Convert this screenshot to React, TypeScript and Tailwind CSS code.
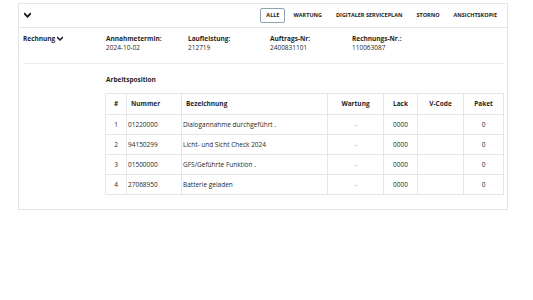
import React from "react";

const rows = [
  { n: "1", num: "01220000", bez: "Dialogannahme durchgeführt ." },
  { n: "2", num: "94150299", bez: "Licht- und Sicht Check 2024" },
  { n: "3", num: "01500000", bez: "GFS/Geführte Funktion ." },
  { n: "4", num: "27068950", bez: "Batterie geladen" },
];

const tabs = ["ALLE", "WARTUNG", "DIGITALER SERVICEPLAN", "STORNO", "ANSICHTSKOPIE"];

function Chevron({ size }: { size: number }) {
  return (
    <svg width={size} height={size} viewBox="0 0 10 10" className="shrink-0">
      <path d="M1 2.6 L5 6.6 L9 2.6" fill="none" stroke="#1a1a1a" strokeWidth="2.6" strokeLinecap="square" />
    </svg>
  );
}

export default function App() {
  return (
    <div className="w-[533px] h-[300px] bg-white text-[#1f1f1f] pt-[3px]" style={{ fontFamily: '"Open Sans", "Noto Sans", sans-serif' }}>
      <div className="ml-[18px] w-[490px] border border-[#e6e6e6]">
        <div className="h-[24px] flex items-center justify-between border-b border-[#e6e6e6] pl-[5px] pr-[3px]">
          <Chevron size={7} />
          <div className="flex items-center">
            {tabs.map((t, i) => (
              <div
                key={t}
                className={
                  i === 0
                    ? "h-[15px] px-[5px] mr-[1px] flex items-center border border-[#8fa3b5] rounded-[2px] text-[5.5px] font-bold text-[#1a1a1a]"
                    : "h-[15px] px-[7px] flex items-center text-[5.5px] font-bold text-[#1a1a1a]"
                }
              >
                {t}
              </div>
            ))}
          </div>
        </div>
        <div className="pl-[4px] pr-[3px] pb-[14px]">
          <div className="flex pt-[6px] pb-[11px] border-b border-[#ececec]">
            <div className="w-[83px] flex items-start">
              <span className="text-[6.5px] font-bold leading-[9px] flex items-center gap-[2px]">
                Rechnung <Chevron size={6} />
              </span>
            </div>
            {[
              ["Annahmetermin:", "2024-10-02"],
              ["Laufleistung:", "212719"],
              ["Auftrags-Nr:", "2400831101"],
              ["Rechnungs-Nr.:", "110063087"],
            ].map(([l, v]) => (
              <div key={l} className="w-[82px]">
                <div className="text-[6.5px] font-bold leading-[9px]">{l}</div>
                <div className="text-[6.5px] leading-[9px]">{v}</div>
              </div>
            ))}
          </div>
          <div className="ml-[82px]">
            <div className="mt-[11px] text-[6.5px] font-bold leading-[9px] ml-[1px]">Arbeitsposition</div>
            <table className="mt-[9px] border-collapse table-fixed w-[398px] text-[6.5px]">
              <colgroup>
                <col className="w-[21px]" />
                <col className="w-[55px]" />
                <col className="w-[146px]" />
                <col className="w-[56px]" />
                <col className="w-[34px]" />
                <col className="w-[46px]" />
                <col className="w-[40px]" />
              </colgroup>
              <thead>
                <tr className="h-[21px] font-bold">
                  <th className="border border-[#e6e6e6] text-center">#</th>
                  <th className="border border-[#e6e6e6] text-left pl-[4px]">Nummer</th>
                  <th className="border border-[#e6e6e6] text-left pl-[4px]">Bezeichnung</th>
                  <th className="border border-[#e6e6e6] text-center">Wartung</th>
                  <th className="border border-[#e6e6e6] text-center">Lack</th>
                  <th className="border border-[#e6e6e6] text-center">V-Code</th>
                  <th className="border border-[#e6e6e6] text-center">Paket</th>
                </tr>
              </thead>
              <tbody>
                {rows.map((r) => (
                  <tr key={r.n} className="h-[20px]">
                    <td className="border border-[#e6e6e6] text-center">{r.n}</td>
                    <td className="border border-[#e6e6e6] pl-[1px]">{r.num}</td>
                    <td className="border border-[#e6e6e6] pl-[1px]">{r.bez}</td>
                    <td className="border border-[#e6e6e6] text-center text-[#888]">-</td>
                    <td className="border border-[#e6e6e6] text-center">0000</td>
                    <td className="border border-[#e6e6e6]"></td>
                    <td className="border border-[#e6e6e6] text-center">0</td>
                  </tr>
                ))}
              </tbody>
            </table>
          </div>
        </div>
      </div>
    </div>
  );
}
